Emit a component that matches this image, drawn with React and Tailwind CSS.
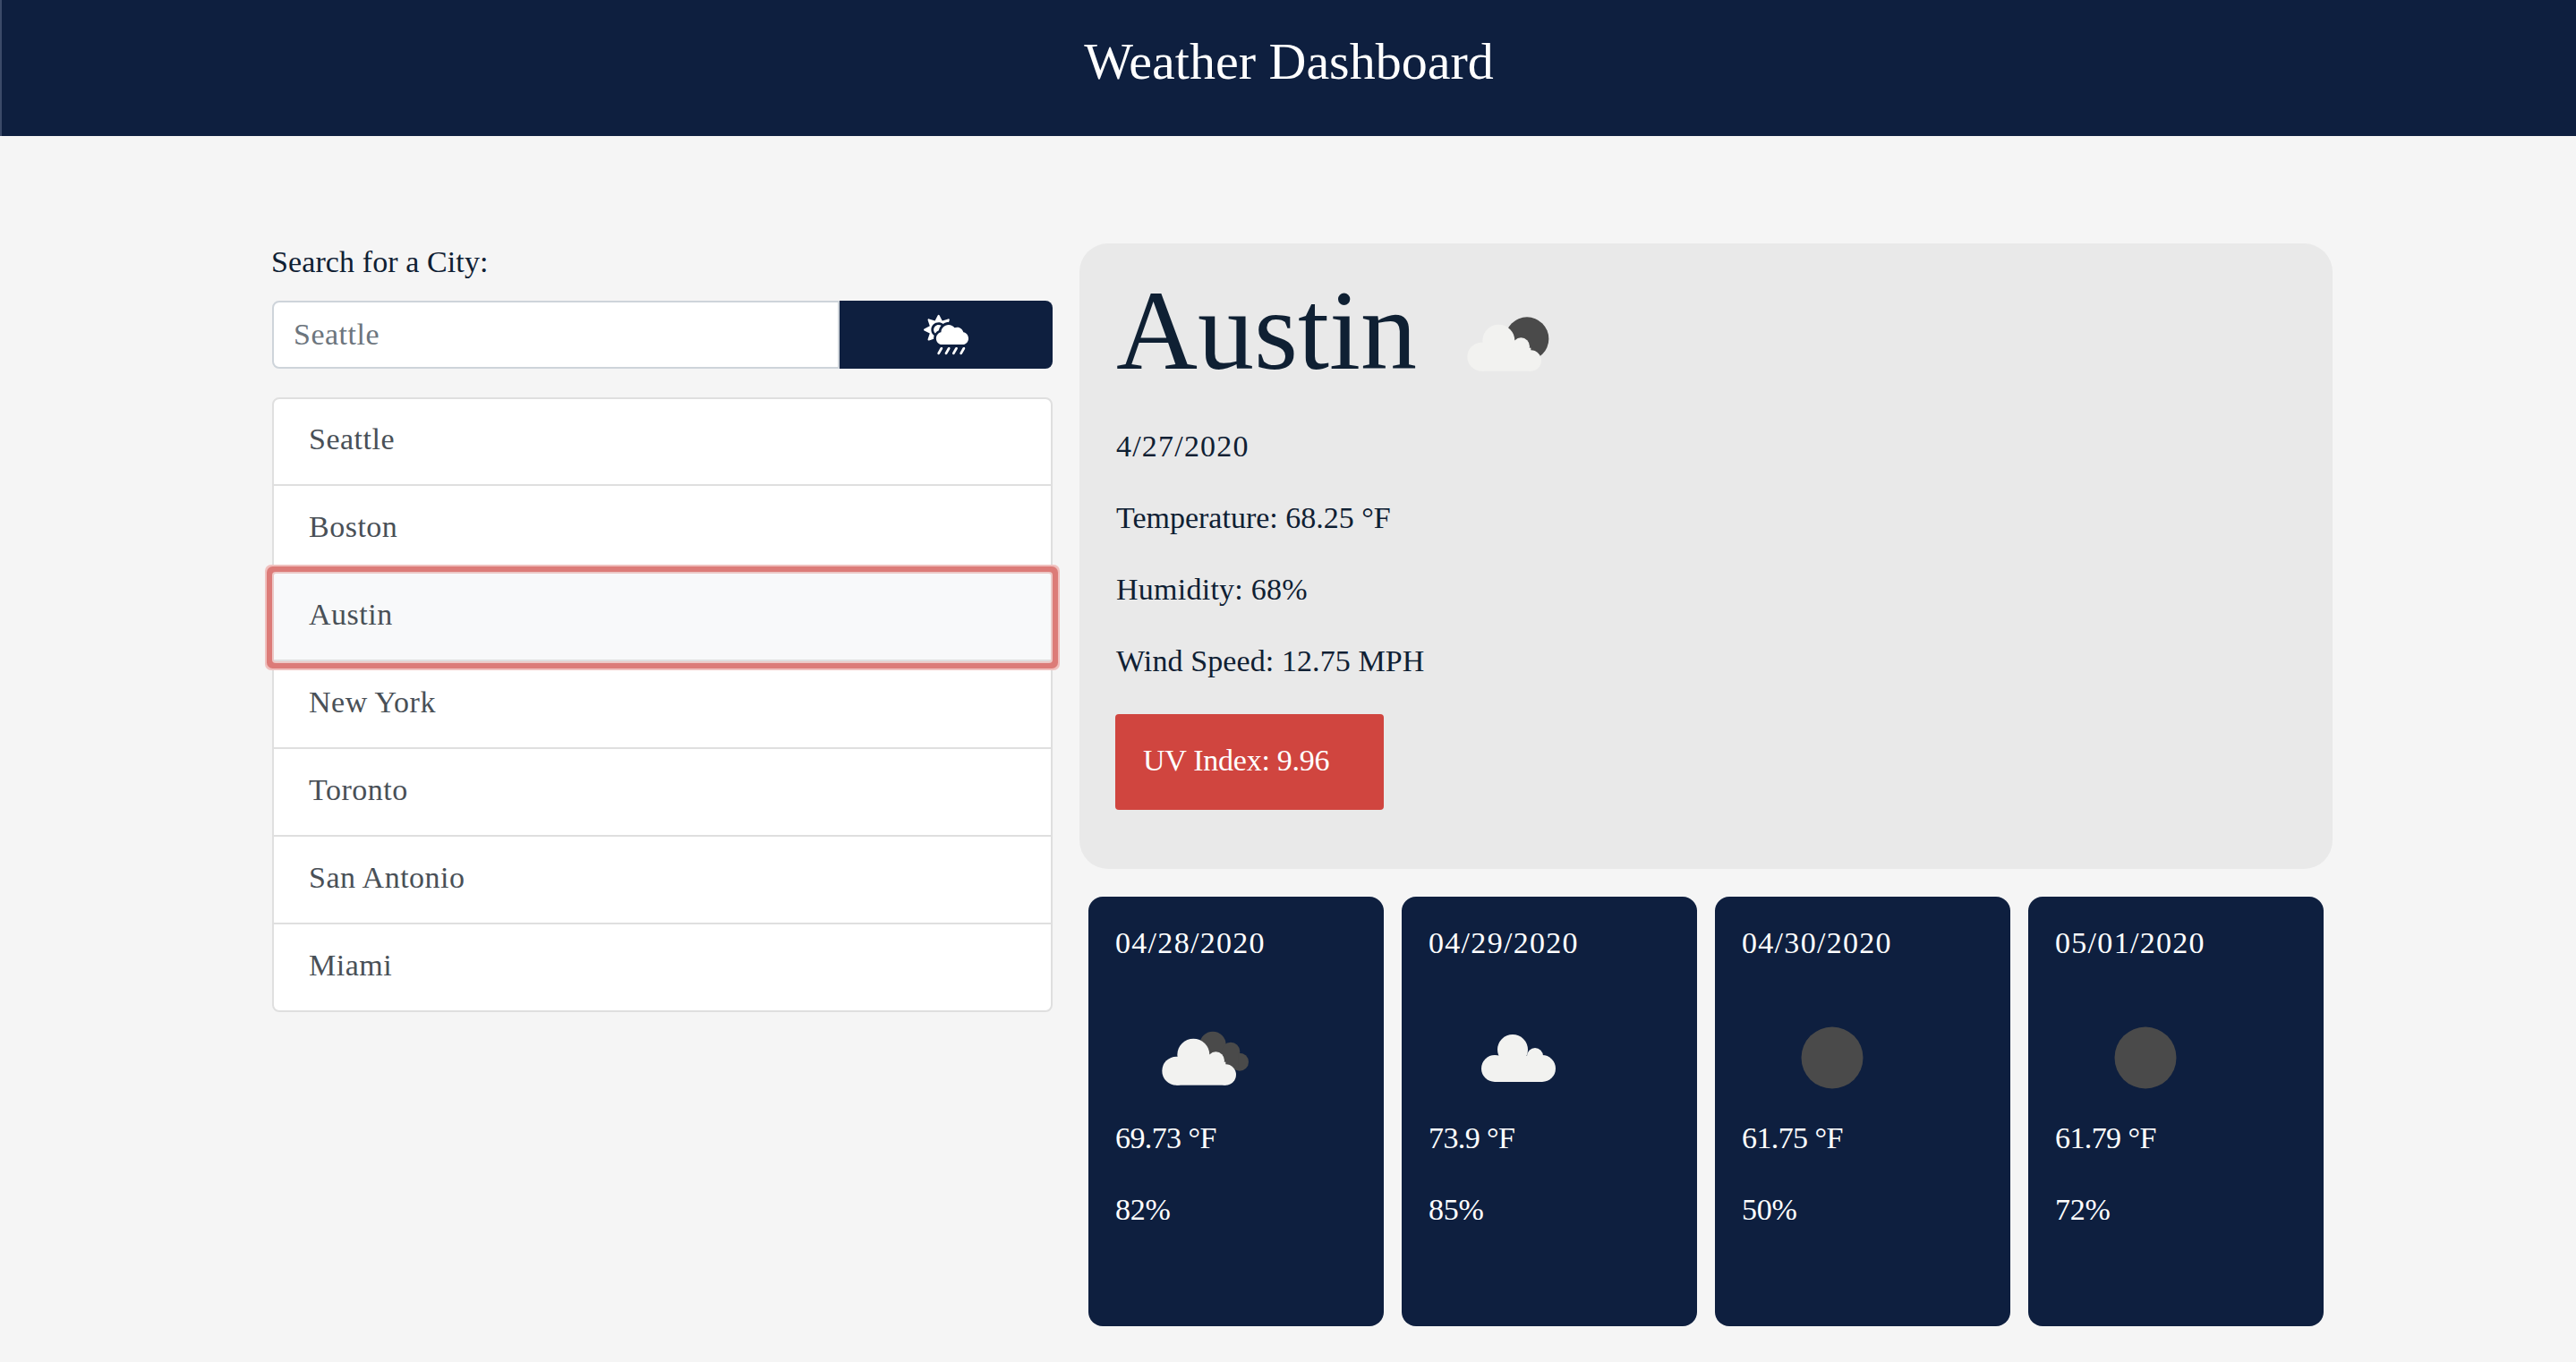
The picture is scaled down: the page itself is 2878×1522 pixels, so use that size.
import { FaCloudSunRain } from 'react-icons/fa';

const cities = ['Seattle', 'Boston', 'Austin', 'New York', 'Toronto', 'San Antonio', 'Miami'];

const details = [
  { text: '4/27/2020', className: 'tracking-[1.2px]' },
  { text: 'Temperature: 68.25 °F', className: '' },
  { text: 'Humidity: 68%', className: 'tracking-[0.25px]' },
  { text: 'Wind Speed: 12.75 MPH', className: 'tracking-[0.1px]' },
];

const forecast = [
  { date: '04/28/2020', temp: '69.73 °F', humidity: '82%', icon: 'clouds' },
  { date: '04/29/2020', temp: '73.9 °F', humidity: '85%', icon: 'cloud' },
  { date: '04/30/2020', temp: '61.75 °F', humidity: '50%', icon: 'clear' },
  { date: '05/01/2020', temp: '61.79 °F', humidity: '72%', icon: 'clear' },
];

const LightCloud = () => (
  <g fill="#f2f2f0">
    <circle cx="133" cy="200" r="48" />
    <circle cx="190" cy="146" r="54" />
    <circle cx="265" cy="165" r="29" />
    <circle cx="298" cy="213" r="35" />
    <rect x="133" y="170" width="165" height="78" />
  </g>
);

const WeatherIcon = ({ type }) => (
  <svg viewBox="0 0 200 140" className="block w-[200px] h-[140px]">
    {type === 'clouds' && (
      <g transform="translate(24 22) scale(0.3333)">
        <g fill="#4a4a4a">
          <circle cx="255" cy="112" r="44" />
          <circle cx="315" cy="135" r="31" />
          <circle cx="345" cy="170" r="30" />
          <rect x="250" y="130" width="90" height="60" />
        </g>
        <LightCloud />
      </g>
    )}
    {type === 'cloud' && (
      <g fill="#f2f2f0">
        <circle cx="74" cy="86" r="15" />
        <circle cx="94" cy="65" r="17" />
        <circle cx="119" cy="72" r="9" />
        <circle cx="127" cy="86" r="15" />
        <rect x="74" y="72" width="53" height="29" />
      </g>
    )}
    {type === 'clear' && <circle cx="101" cy="74" r="34.5" fill="#4a4a4a" />}
  </svg>
);

const HeroIcon = () => (
  <svg viewBox="0 0 450 330" className="block w-[150px] h-[110px] ml-[17px] mt-[14px]">
    <circle cx="318" cy="170" r="73" fill="#4a4a4a" />
    <g transform="translate(33 30)">
      <LightCloud />
    </g>
  </svg>
);

export default function App() {
  return (
    <div className="min-h-screen bg-[#f5f5f5] text-[#0f2033] font-['Liberation_Serif',serif] text-[34px] leading-[48px]">
      <header className="h-[152px] bg-[#0e1f3f] border-l-2 border-[#3b4a68] flex items-center justify-center pb-[15px]">
        <h1 className="text-[58px] leading-none text-white">Weather Dashboard</h1>
      </header>

      <main className="flex gap-[30px] pl-[303px] pr-[272px] pt-[117px] pb-[40px]">
        <section className="w-[873px]">
          <label className="block text-[#0f2033] tracking-[0.1px]">Search for a City:</label>
          <div className="flex mt-[19px] ml-[1px]">
            <input
              placeholder="Seattle"
              className="w-[634px] h-[76px] bg-white border-2 border-[#ced4da] rounded-l-lg px-[22px] tracking-[0.5px] outline-none placeholder:text-[#6c757d]"
            />
            <button className="w-[238px] h-[76px] bg-[#0e1f3f] rounded-r-lg flex items-center justify-center text-white">
              <FaCloudSunRain className="w-[50px] h-[50px]" />
            </button>
          </div>
          <ul className="mt-[32px] ml-[1px] bg-white border-2 border-[#dfdfdf] rounded-lg divide-y-2 divide-[#dfdfdf]">
            {cities.map((city) => (
              <li
                key={city}
                className={
                  city === 'Austin'
                    ? "relative z-10 h-[98px] flex items-center pl-[39px] pb-[4px] tracking-[0.5px] text-[#495057] bg-[#f8f9fa] shadow-[0_0_0_2px_#ecc8c6,0_0_0_8px_#dc7b78,0_0_0_10px_#f0c0be] rounded-[2px]"
                    : 'h-[98px] first:h-[97px] first:pb-[6px] last:h-[96px] flex items-center pl-[39px] pb-[4px] tracking-[0.5px] text-[#495057]'
                }
              >
                {city}
              </li>
            ))}
          </ul>
        </section>

        <section className="w-[1400px] mt-[3px]">
          <div className="bg-[#e9e9e9] rounded-[32px] pl-[41px] pt-[24px] h-[699px]">
            <div className="flex items-center mb-[32px]">
              <h2 className="text-[126px] leading-[147px] text-[#0f2033]">Austin</h2>
              <HeroIcon />
            </div>
            {details.map((line) => (
              <p key={line.text} className={`mb-[32px] ${line.className}`}>{line.text}</p>
            ))}
            <button className="mt-[3px] -ml-[1px] w-[300px] h-[107px] bg-[#d0453f] rounded-[4px] text-white text-left pl-[31px] pb-[3px] tracking-[-0.25px]">
              UV Index: 9.96
            </button>
          </div>

          <div className="grid grid-cols-4 gap-[20px] px-[10px] mt-[31px]">
            {forecast.map((day) => (
              <div key={day.date} className="h-[480px] bg-[#0e1f3f] rounded-2xl text-white px-[30px] pt-[28px]">
                <p className="mb-[30px] tracking-[1.3px]">{day.date}</p>
                <WeatherIcon type={day.icon} />
                <p className="mb-[32px] tracking-[-0.6px]">{day.temp}</p>
                <p className="tracking-[-0.2px]">{day.humidity}</p>
              </div>
            ))}
          </div>
        </section>
      </main>
    </div>
  );
}
